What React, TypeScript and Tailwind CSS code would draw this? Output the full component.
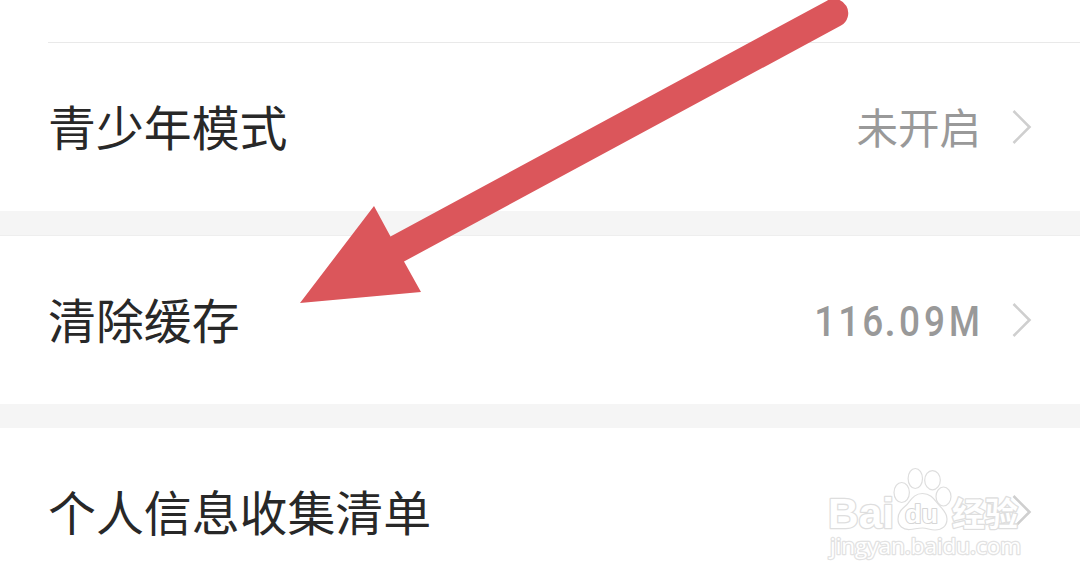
import React from 'react';

interface SettingRowProps {
  label: string;
  children?: React.ReactNode;
  className?: string;
}

const Chevron: React.FC = () => (
  <svg className="w-[20px] h-[34px]" viewBox="0 0 20 34" fill="none" stroke="#cfcfcf" strokeWidth="2.6">
    <path d="M1.5 1L17.5 17L1.5 33" />
  </svg>
);

const SettingRow: React.FC<SettingRowProps> = ({ label, children, className = '' }) => (
  <div className={`flex items-center justify-between bg-white pl-[48px] pr-12 ${className}`}>
    <span className="pb-[3px] text-[47.900px] leading-none text-[#282828]">{label}</span>
    <div className="flex items-center text-[#999999]">
      {children}
      <Chevron />
    </div>
  </div>
);

const Arrow: React.FC = () => (
  <svg className="absolute inset-0 w-[1080px] h-[584px]" viewBox="0 0 1080 584">
    <path
      fill="#db565b"
      d="M300 303L374 206L390.500 236.500L827 .7A14.200 14.200 0 0 1 841 25.500L404 261.500L421 292Z"
    />
  </svg>
);

const Watermark: React.FC = () => (
  <svg
    className="absolute left-[810px] top-[450px] w-[240px] h-[134px]"
    viewBox="0 0 240 134"
    fill="#ffffff"
    stroke="#dedede"
    strokeWidth="1.2"
    strokeLinejoin="round"
  >
    <g strokeWidth="2.6" paintOrder="stroke">
      <text x="18" y="78" fontSize="43" fontFamily="'Liberation Sans', sans-serif" fontWeight="700" textLength="66" lengthAdjust="spacingAndGlyphs">Bai</text>
      <text x="142" y="76" fontSize="33" fontFamily="'Noto Sans CJK SC', sans-serif" fontWeight="700" textLength="66">经验</text>
    </g>
    <ellipse cx="91.700" cy="42.500" rx="7.700" ry="10" />
    <ellipse cx="105.300" cy="28.500" rx="7.200" ry="10" />
    <ellipse cx="122.500" cy="30.200" rx="7.800" ry="9.600" />
    <ellipse cx="133.500" cy="46.500" rx="7.500" ry="9.500" />
    <path d="M112.500 43.500C104 43.500 101 50 97 54.500C92 59 88 62 88 69C88 76 93 80 100 79.500C105 79 108 78 112.500 78C117 78 120 80 125 80C132 80 137 76 137 69C137 62 132 59 128 54C124 49 121 43.500 112.500 43.500Z" />
    <text x="95" y="73" fontSize="25" fontFamily="'Liberation Sans', sans-serif" fontWeight="700" textLength="33" lengthAdjust="spacingAndGlyphs" stroke="#d6d6d6" strokeWidth="2" paintOrder="stroke">du</text>
    <text x="20" y="104" fontSize="21" fontFamily="'Open Sans', sans-serif" fontWeight="400" textLength="191" lengthAdjust="spacingAndGlyphs" stroke="#e2e2e2" strokeWidth="2.4" paintOrder="stroke">jingyan.baidu.com</text>
  </svg>
);

const App: React.FC = () => {
  return (
    <div className="relative flex flex-col w-[1080px] h-[584px] overflow-hidden bg-white font-['Noto_Sans_CJK_SC',sans-serif]">
      <div className="h-[42px] shrink-0" />
      <div className="h-px ml-12 shrink-0 bg-[#e9e9e9]" />
      <SettingRow label="青少年模式" className="h-[168px] shrink-0">
        <span className="mr-[31px] pb-px text-[41.500px] leading-none">未开启</span>
      </SettingRow>

      <div className="h-[25px] shrink-0 bg-[#f5f5f5] border-b border-[#eeeeee]" />
      <SettingRow label="清除缓存" className="h-[168px] shrink-0">
        <span className="flex mr-[30px] pt-[3px] text-[42px] leading-none font-medium text-center font-['Roboto',sans-serif]">
          <span className="w-[24px] scale-x-[0.9]">1</span>
          <span className="w-[24px] scale-x-[0.9]">1</span>
          <span className="w-[22px] scale-x-[0.88]">6</span>
          <span className="w-[14px]">.</span>
          <span className="w-[25px] scale-x-[0.88]">0</span>
          <span className="w-[25px] scale-x-[0.88]">9</span>
          <span className="flex justify-center w-[35px] scale-x-[0.84]">M</span>
        </span>
      </SettingRow>

      <div className="h-[24px] shrink-0 bg-[#f5f5f5]" />
      <SettingRow label="个人信息收集清单" className="h-[168px] shrink-0" />

      <Arrow />
      <Watermark />
    </div>
  );
};

export default App;
